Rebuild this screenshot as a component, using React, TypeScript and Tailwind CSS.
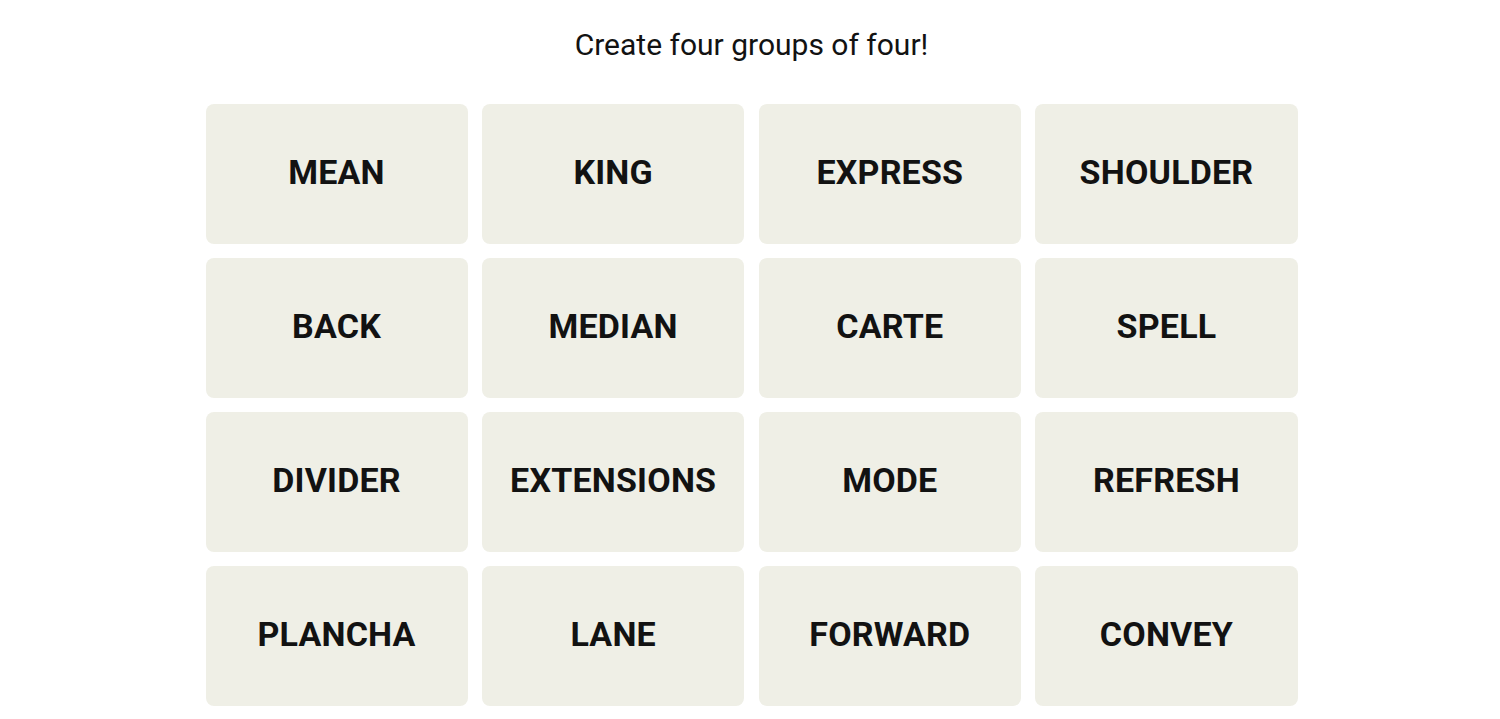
const words = [
  "MEAN", "KING", "EXPRESS", "SHOULDER",
  "BACK", "MEDIAN", "CARTE", "SPELL",
  "DIVIDER", "EXTENSIONS", "MODE", "REFRESH",
  "PLANCHA", "LANE", "FORWARD", "CONVEY",
];

function Tile({ word }: { word: string }) {
  return (
    <button className="flex h-[140px] items-center justify-center rounded-[8px] bg-[#efefe6] pb-[4px] text-[34px] font-bold tracking-[0.2px] text-[#121212] uppercase">
      {word}
    </button>
  );
}

export default function App() {
  return (
    <div className="min-h-[719px] bg-white pl-[3px] font-['Roboto',_'Liberation_Sans',_sans-serif]">
      <h1 className="pt-[25px] text-center text-[30px] leading-[40px] font-normal text-[#121212]">
        Create four groups of four!
      </h1>
      <div className="mx-auto mt-[39px] grid w-[1092px] grid-cols-4 gap-x-[14.6px] gap-y-[14px]">
        {words.map((w) => (
          <Tile key={w} word={w} />
        ))}
      </div>
    </div>
  );
}
